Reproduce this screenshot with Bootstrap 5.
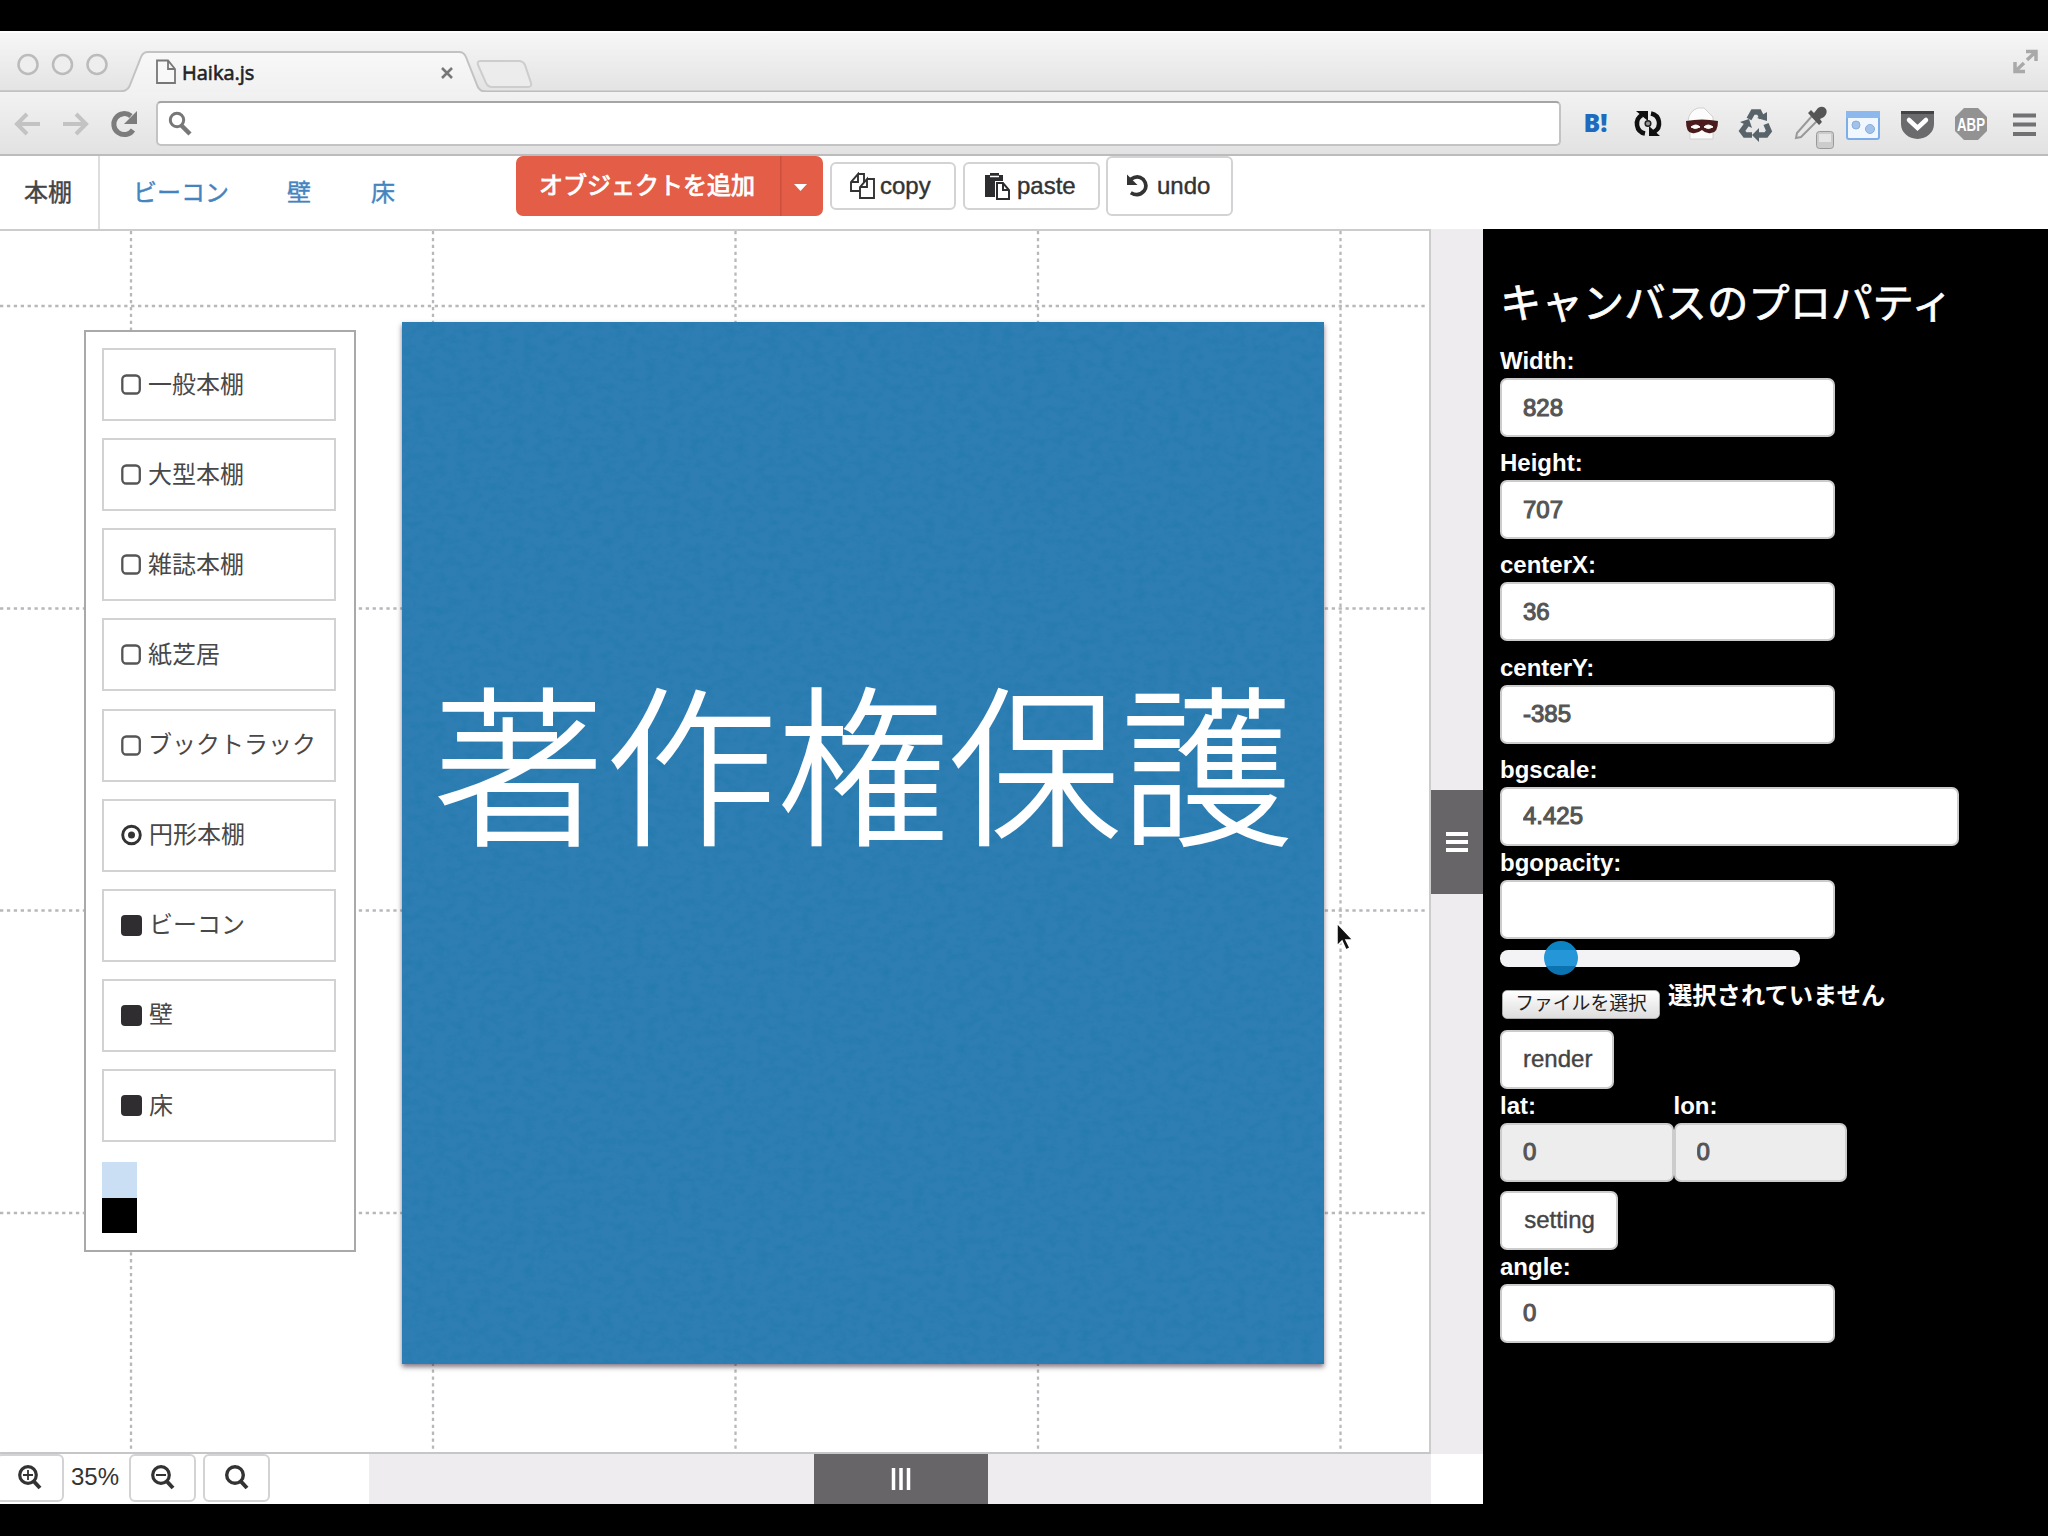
<!DOCTYPE html>
<html lang="ja">
<head>
<meta charset="utf-8">
<title>Haika.js</title>
<link href="https://cdn.jsdelivr.net/npm/bootstrap@5.3.0/dist/css/bootstrap.min.css" rel="stylesheet">
<style>
html,body{height:100%}
body{background:#000;font-family:"Liberation Sans","Noto Sans CJK JP",sans-serif;font-size:24px;line-height:34px;color:#333;overflow:hidden;padding-top:31px}
svg{display:block;flex:none}
.titlebar{height:61px;background:linear-gradient(#f7f7f7,#e3e3e3)}
.tabtitle{font-family:"Open Sans","Noto Sans",sans-serif;font-size:20px;color:#222;left:182px;top:25px;line-height:34px;-webkit-text-stroke:.6px #222}
.addressbar{height:64px;background:linear-gradient(#f2f2f2,#e2e2e3);border-bottom:2px solid #bcbcbe}
.omnibox{width:1405px;height:45px;margin:1px 0 0 18px;border:2px solid #c3c3c5;border-top-color:#a5a5a7;border-radius:5px;background:#fff;padding-left:9px}
.toolrow{height:73px;background:#fff}
.modes{width:516px;border-bottom:2px solid #c9c9cc}
.modes .nav-link{padding:21px 0 0 33px;line-height:32px;color:#4484be;height:73px;-webkit-text-stroke:.4px}
.modes .nav-link.active{color:#444;padding-left:24px;width:100px;border-right:2px solid #ddd;border-bottom:0;background:#fff}
.modes .nav-link.wall{padding-left:58px}
.modes .nav-link.floor{padding-left:60px}
.btn-add{height:60px;border:0;border-radius:7px;color:#fff;background:#e35d47;font-size:24px;-webkit-text-stroke:.9px #fff}
.btn-add .caption{width:264px;padding:0 0 1px 23px}
.tool{height:48px;border:2px solid #d3d3d5;border-radius:6px;background:#fff;color:#333;font-size:24px;line-height:30px;padding:0;display:flex;align-items:center;-webkit-text-stroke:.4px #333}
.tool-copy{width:126px;margin:6px 7px 0 7px}
.tool-copy svg{margin:0 5px 0 18px}
.tool-paste{width:137px;margin:6px 6px 0 0}
.tool-paste svg{margin:0 6px 0 20px}
.tool-undo{width:127px;height:60px}
.tool-undo svg{margin:0 8px 0 19px}
.work{height:1275px}
.stage{width:1431px;height:1225px;background:#fff;border-top:2px solid #ccc;border-right:2px solid #ccc;border-bottom:2px solid #c6c6c8}
.pointer{left:1335px;top:690px}
.vscroll{width:52px;height:1225px;background:#eeecef;padding-top:561px}
.vgrip{height:104px;background:#676568}
.hscroll{width:1062px;background:#eeecef;padding-left:445px}
.hgrip{width:174px;height:50px;background:#676568}
.bottombar{height:50px;background:#fff;width:1483px}
.zoombtn{height:48px;width:67px;margin-right:7px}
.zoombtn svg{margin-left:20px}
.zoom-first{width:68px;margin-left:-4px}
.zoom-last{margin-right:99px}
.palette{left:84px;top:99px;width:272px;height:922px;border:2px solid #aaa8ab;background:#fff;padding:16px}
.palette .list-group{gap:17.15px}
.palette .list-group-item{height:73px;width:234px;border:2px solid #d2d2d4;border-radius:0;padding:0 0 0 17px;display:flex;align-items:center;line-height:30px;color:#484848;gap:7px}
.swatch{width:35px;height:35.5px}
.swatch-fill{background:#cbdff4;margin-top:20px}
.swatch-line{background:#000}
.notice{left:402px;top:91px;width:922px;height:1042px;background:#2e7eb3;box-shadow:0 3px 5px rgba(50,30,50,.6);color:#fff;font-family:"Noto Sans CJK JP",sans-serif;font-weight:300;font-size:172px;line-height:240px;padding-top:315px;text-align:center;white-space:nowrap;-webkit-text-stroke:2px #fff}
.props{width:565px;background:#000;color:#fff;padding:50px 0 0 17px}
.props h1{font-size:41.4px;line-height:50px;margin:0 0 15px;font-weight:400;height:50px;-webkit-text-stroke:.7px #fff;white-space:nowrap}
.props label{display:block;font-weight:700;line-height:34px;height:34px}
.props .form-control{width:335px;height:59px;border:2px solid #ccc;border-radius:7px;font-size:24px;line-height:34px;padding:0 20px 0 21px;color:#555;background:#fff;-webkit-text-stroke:1.1px #555}
.props .form-control.wide{width:459px}
.props .form-control[readonly]{background:#eeedee;width:173.500px}
.grp{margin-bottom:9.2px}
.props .btn{height:59px;border:2px solid #ccc;border-radius:7px;background:#fff;font-size:24px;color:#444;padding:0 20px 0 21px;-webkit-text-stroke:.4px #444}
.props .btn-render{width:114px}
.props .btn-set{width:118px}
.slide{width:300px;height:17px;border-radius:8px;background:#f3f2f4;margin-top:11px}
.knob{width:34px;height:34px;border-radius:50%;left:44px;top:-9px;background:linear-gradient(#0c84c4 26%,#2596d8 27%,#2596d8 73%,#0a73b0 75%)}
.filerow{height:53px;margin-top:10px;padding-left:2px}
.filerow span{line-height:38px;font-size:24.3px}
.filebtn{width:158px;height:29px;margin-top:13px;border-radius:5px;border:1px solid #aaa;background:linear-gradient(#fff,#ddd);color:#222;font-size:18.8px;line-height:26px;text-align:center;padding:0}
</style>
</head>
<body>
<header>
  <div class="titlebar position-relative">
    <svg width="2048" height="61" viewBox="0 31 2048 61">
      <defs><linearGradient id="tg" x1="0" y1="0" x2="0" y2="1"><stop offset="0" stop-color="#f8f8f8"/><stop offset="1" stop-color="#f1f1f1"/></linearGradient></defs>
      <path d="M0 91.500H2048" stroke="#bdbdbd" stroke-width="2"/>
      <path d="M0 91.500H124Q128 91 130 85L141 57Q143 52 148 52H459Q464 52 466 57L477 85Q479 92 484 92.500H124Z" fill="url(#tg)"/>
      <path d="M0 31H2048V33H0Z" fill="#fdfdfd"/>
      <path d="M0 91.500H120Q128 91 130 85L141 57Q143 52 148 52H459Q464 52 466 57L477 85Q479 91.500 486 91.500" fill="none" stroke="#c2c2c2" stroke-width="2"/>
      <g fill="#eee" stroke="#bbb" stroke-width="2.500"><circle cx="28" cy="64.500" r="9.500"/><circle cx="62.500" cy="64.500" r="9.500"/><circle cx="97" cy="64.500" r="9.500"/></g>
      <path d="M157 60.500H168L175 69V83H157ZM168 60.500V69H175" fill="#f8f8f8" stroke="#777" stroke-width="1.800"/>
      <path d="M442 68L452 78M452 68L442 78" stroke="#777" stroke-width="2.600"/>
      <path d="M480 61H519Q523 61 525 65L531 83Q532 87 528 87H492Q488 87 486 83L478 65Q477 61 480 61Z" fill="#ececec" stroke="#cdcdcd" stroke-width="2"/>
      <g fill="none" stroke="#a9a9a9" stroke-width="3.500"><path d="M2026 51.500H2036V61M2036 51.500L2027 60M2025 71.500H2015V62M2015 71.500L2024 63"/></g>
    </svg>
    <span class="tabtitle position-absolute">Haika.js</span>
  </div>
  <div class="addressbar d-flex align-items-center">
    <svg width="138" height="62" viewBox="0 92 138 62">
      <g fill="none" stroke="#c3c3c3" stroke-width="4"><path d="M40 124H17M27 114L17 124L27 134"/><path d="M63 124H86M76 114L86 124L76 134"/></g>
      <path d="M133 130A10.500 10.500 0 1 1 131 116" fill="none" stroke="#7c7c7c" stroke-width="5"/><path d="M137 111V124H124Z" fill="#7c7c7c"/>
    </svg>
    <div class="omnibox d-flex align-items-center">
      <svg width="26" height="26" viewBox="0 0 26 26"><circle cx="10" cy="9" r="6.700" fill="none" stroke="#777" stroke-width="3"/><path d="M14 14L23 23" stroke="#777" stroke-width="4.500"/></svg>
    </div>
    <svg width="486" height="62" viewBox="1561 92 486 62">
      <text x="1583.500" y="132" font-family="Open Sans" font-weight="800" font-size="24" fill="#1e6abf" textLength="24" lengthAdjust="spacingAndGlyphs">B!</text>
      <g fill="none" stroke="#111" stroke-width="4.500"><path d="M1645 133.500A10 10 0 0 1 1642 115"/><path d="M1651 113.500A10 10 0 0 1 1654 132"/></g>
      <path d="M1636 111H1648V121ZM1660 136H1649V126Z" fill="#111"/><circle cx="1648" cy="123.500" r="2.800" fill="#999" stroke="#222" stroke-width="1.500"/>
      <path d="M1688 121Q1689 111 1698 108H1704L1713 117V139H1690V121Z" fill="#fcfcfc" stroke="#d0d0d0"/>
      <path d="M1686 121Q1702 118 1718 121Q1718 133 1711 133Q1706 134 1702 130Q1697 134 1692 133Q1686 133 1686 121Z" fill="#4a1d1c"/><path d="M1691 127Q1696 123 1700 127Q1695 130 1691 127ZM1704 127Q1708 123 1713 127Q1708 130 1704 127Z" fill="#fff" stroke="#fff"/>
      <g fill="none" stroke="#59646a" stroke-width="5.500"><path d="M1749 119L1753 112H1759L1762 118"/><path d="M1766 124L1769 131L1766 135H1758"/><path d="M1752 135H1745L1742 131L1747 124"/></g>
      <path d="M1757 118L1767 121L1767 112ZM1759 128V142L1752 135ZM1740 122L1749 119L1752 128Z" fill="#59646a"/>
      <path d="M1796 138L1797 133L1812 116L1817 121L1801 137Z" fill="#e8e8e8" stroke="#999" stroke-width="2"/><path d="M1808 113L1811 110L1814 113L1818 108Q1823 105 1826 109Q1828 113 1824 117L1820 119L1822 122L1819 125Z" fill="#555"/>
      <rect x="1816.500" y="131.500" width="17" height="17" rx="3" fill="#ccc" stroke="#999"/><rect x="1819" y="134" width="12" height="8" fill="#e6e6e6"/>
      <rect x="1847" y="112" width="32" height="27" rx="2" fill="#f1f7fe" stroke="#7eaee8" stroke-width="2"/><path d="M1846 111H1880V118H1846Z" fill="#8db8ee"/><g fill="#a2c2ea" stroke="#88aedb"><circle cx="1856" cy="125" r="4"/><circle cx="1870" cy="129" r="4.500"/></g>
      <path d="M1901 111H1934V124A16.500 15 0 0 1 1901 124Z" fill="#6b6b6e"/><path d="M1901 111H1934V114H1901Z" fill="#444"/><path d="M1909 120L1917.500 128L1926 120" fill="none" stroke="#fff" stroke-width="4.500" stroke-linecap="round"/>
      <path d="M1964 108H1978L1987 117V131L1978 140H1964L1955 131V117Z" fill="#929292"/><text x="1957" y="130.500" font-family="Liberation Sans" font-weight="700" font-size="18" fill="#fff" textLength="28" lengthAdjust="spacingAndGlyphs">ABP</text>
      <path d="M2013 115.500H2036M2013 124.500H2036M2013 134H2036" stroke="#717173" stroke-width="4"/>
    </svg>
  </div>
</header>

<div class="toolrow d-flex align-items-start">
  <nav class="modes nav flex-nowrap">
    <a class="nav-link active">本棚</a><a class="nav-link">ビーコン</a><a class="nav-link wall">壁</a><a class="nav-link floor">床</a>
  </nav>
  <div class="btn-add btn-group">
    <span class="caption text-nowrap d-flex align-items-center">オブジェクトを追加</span>
    <svg width="43" height="60"><path d="M.5 0V60" stroke="#cc503d" stroke-width="2"/><path d="M14 28H27L20.500 35Z" fill="#fff"/></svg>
  </div>
  <button class="btn tool tool-copy">
    <svg width="25" height="28" viewBox="0 0 25 28"><g fill="#fff" stroke="#333" stroke-width="1.900"><path d="M8 2H14V19H1V10L8 2V10H1"/><path d="M17 7H24V26H10V15L17 7V15H10"/></g></svg>copy
  </button>
  <button class="btn tool tool-paste">
    <svg width="26" height="27" viewBox="0 0 26 27"><path d="M0 2H5V0H14V2H18V8H10V24H0Z" fill="#2d2d2f"/><path d="M5 3.500H14" stroke="#fff" stroke-width="1.500"/><path d="M12 10H18L24 17V26H12ZM18 10V17H24" fill="#fff" stroke="#2d2d2f" stroke-width="2"/></svg>paste
  </button>
  <button class="btn tool tool-undo">
    <svg width="22" height="24" viewBox="0 0 23 24"><path d="M4 5Q11 0 17 5Q22 11 18 17Q12 24 4 19" fill="none" stroke="#333" stroke-width="3.800"/><path d="M0 0V11H11Z" fill="#333"/></svg>undo
  </button>
</div>

<main class="work d-flex">
  <div>
    <div class="d-flex">
      <section class="stage position-relative">
        <svg width="1429" height="1221" viewBox="0 231 1429 1221"><g stroke="#b9b7bc" stroke-width="2.300" stroke-dasharray="3.300 3.600"><path d="M131 231V1453M433 231V1453M735.500 231V1453M1038 231V1453M1340.500 231V1453M0 306H1428M0 608.500H1428M0 910.500H1428M0 1213H1428"/></g></svg>
        <aside class="palette position-absolute">
          <div class="list-group" id="shapes"></div>
          <div class="swatch swatch-fill"></div>
          <div class="swatch swatch-line"></div>
        </aside>
        <div class="notice position-absolute">
          <svg class="position-absolute top-0 start-0" width="922" height="1042"><filter id="paper"><feTurbulence type="fractalNoise" baseFrequency=".09 .13" numOctaves="4" seed="4"/><feColorMatrix values="0 0 0 0 0  0 0 0 0 .16  0 0 0 0 .32  0 0 0 1.200 -.5"/></filter><rect width="922" height="1042" filter="url(#paper)" opacity=".35"/></svg>
          <div class="position-relative">著作権保護</div>
        </div>
        <svg class="pointer position-absolute" width="22" height="34" viewBox="0 0 22 34"><path d="M2 2V25L7 20L11 29L15 27L11 19H18Z" fill="#111" stroke="#fff" stroke-width="1.500"/></svg>
      </section>
      <div class="vscroll"><div class="vgrip d-flex align-items-center justify-content-center"><svg width="22" height="20"><path d="M0 2H22M0 10H22M0 18H22" stroke="#fff" stroke-width="4"/></svg></div></div>
    </div>
    <footer class="bottombar d-flex">
      <button class="btn tool zoombtn zoom-first"><svg width="24" height="26" viewBox="0 0 24 26"><circle cx="10" cy="10" r="8.300" fill="none" stroke="#333" stroke-width="3.200"/><path d="M15.500 16L22 23" stroke="#333" stroke-width="4"/><path d="M5 10H15M10 5V15" stroke="#333" stroke-width="1.800"/></svg></button>
      <span style="width:58px;line-height:46px">35%</span>
      <button class="btn tool zoombtn"><svg width="24" height="26" viewBox="0 0 24 26"><circle cx="10" cy="10" r="8.300" fill="none" stroke="#333" stroke-width="3.200"/><path d="M15.500 16L22 23" stroke="#333" stroke-width="4"/><path d="M5 10H15" stroke="#333" stroke-width="2"/></svg></button>
      <button class="btn tool zoombtn zoom-last"><svg width="24" height="26" viewBox="0 0 24 26"><circle cx="10" cy="10" r="8.300" fill="none" stroke="#333" stroke-width="3.400"/><path d="M15.500 16L22 23" stroke="#333" stroke-width="4"/></svg></button>
      <div class="hscroll"><div class="hgrip d-flex align-items-center justify-content-center"><svg width="20" height="22"><path d="M2.500 0V22M10 0V22M17.500 0V22" stroke="#fff" stroke-width="3.500"/></svg></div></div>
    </footer>
  </div>
  <aside class="props">
    <h1>キャンバスのプロパティ</h1>
    <div class="grp"><label>Width:</label><input class="form-control" value="828"></div>
    <div class="grp"><label>Height:</label><input class="form-control" value="707"></div>
    <div class="grp"><label>centerX:</label><input class="form-control" value="36"></div>
    <div class="grp"><label>centerY:</label><input class="form-control" value="-385"></div>
    <label>bgscale:</label><input class="form-control wide" value="4.425">
    <label>bgopacity:</label><input class="form-control">
    <div class="slide position-relative"><div class="knob position-absolute"></div></div>
    <div class="filerow d-flex">
      <button class="filebtn">ファイルを選択</button>
      <span class="fw-bold ms-2">選択されていません</span>
    </div>
    <button class="btn btn-render d-block">render</button>
    <div class="d-flex grp">
      <div><label>lat:</label><input class="form-control" readonly value="0"></div>
      <div><label>lon:</label><input class="form-control" readonly value="0"></div>
    </div>
    <button class="btn btn-set d-block">setting</button>
    <label>angle:</label><input class="form-control" value="0">
  </aside>
</main>
<script src="https://cdn.jsdelivr.net/npm/bootstrap@5.3.0/dist/js/bootstrap.bundle.min.js"></script>
<script>
const icons={
  open:'<svg width="20" height="21"><rect x="1.300" y="1.500" width="17.500" height="18" rx="4" fill="none" stroke="#555" stroke-width="2.300"/></svg>',
  dot:'<svg width="21" height="22"><circle cx="10.500" cy="11" r="8.800" fill="none" stroke="#333" stroke-width="2.900"/><circle cx="10.500" cy="11" r="3.500" fill="#333"/></svg>',
  full:'<svg width="21" height="21"><rect width="21" height="21" rx="4" fill="#2f2d30"/></svg>'
};
const shapes=[['open','一般本棚'],['open','大型本棚'],['open','雑誌本棚'],['open','紙芝居'],['open','ブックトラック'],['dot','円形本棚'],['full','ビーコン'],['full','壁'],['full','床']];
document.getElementById('shapes').innerHTML=shapes.map(([i,t])=>`<div class="list-group-item">${icons[i]}<span>${t}</span></div>`).join('');
</script>
</body>
</html>
